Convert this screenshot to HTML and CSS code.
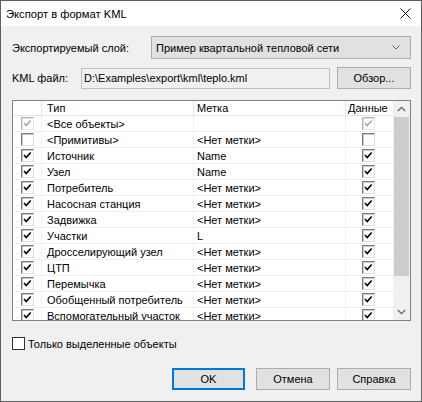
FILE: index.html
```html
<!DOCTYPE html>
<html>
<head>
<meta charset="utf-8">
<link rel="stylesheet" href="styles.css">
</head>
<body>
<div class="window">
  <div class="titlebar">
    <span class="title">Экспорт в формат KML</span>
    <svg class="close" width="11" height="11" viewBox="0 0 11 11"><path d="M0.5 0.5 L10.5 10.5 M10.5 0.5 L0.5 10.5" stroke="#111" stroke-width="1" fill="none"/></svg>
  </div>
  <div class="content">
    <div class="layer-row">
      <span class="lbl-layer">Экспортируемый слой:</span>
      <div class="combo">
        <span>Пример квартальной тепловой сети</span>
        <svg width="8" height="5" viewBox="0 0 8 5"><path d="M0.5 0.5 L4 4 L7.5 0.5" stroke="#666" stroke-width="1" fill="none"/></svg>
      </div>
    </div>
    <div class="file-row">
      <span class="lbl-file">KML файл:</span>
      <div class="field">D:\Examples\export\kml\teplo.kml</div>
      <div class="btn browse">Обзор...</div>
    </div>
    <div class="list">
      <div class="grid">
        <div class="row head">
          <div class="c c1"></div><div class="c c2">Тип</div><div class="c c3">Метка</div><div class="c c4">Данные</div>
        </div>
        <div class="row"><div class="c c1"><span class="cb dis"><svg viewBox="0 0 11 11"><path d="M2 5 L4.2 7.5 L8.7 2.5"/></svg></span></div><div class="c c2">&lt;Все объекты&gt;</div><div class="c c3"></div><div class="c c4"><span class="cb dis"><svg viewBox="0 0 11 11"><path d="M2 5 L4.2 7.5 L8.7 2.5"/></svg></span></div></div>
        <div class="row"><div class="c c1"><span class="cb"></span></div><div class="c c2">&lt;Примитивы&gt;</div><div class="c c3">&lt;Нет метки&gt;</div><div class="c c4"><span class="cb"></span></div></div>
        <div class="row"><div class="c c1"><span class="cb"><svg viewBox="0 0 11 11"><path d="M2 5 L4.2 7.5 L8.7 2.5"/></svg></span></div><div class="c c2">Источник</div><div class="c c3">Name</div><div class="c c4"><span class="cb"><svg viewBox="0 0 11 11"><path d="M2 5 L4.2 7.5 L8.7 2.5"/></svg></span></div></div>
        <div class="row"><div class="c c1"><span class="cb"><svg viewBox="0 0 11 11"><path d="M2 5 L4.2 7.5 L8.7 2.5"/></svg></span></div><div class="c c2">Узел</div><div class="c c3">Name</div><div class="c c4"><span class="cb"><svg viewBox="0 0 11 11"><path d="M2 5 L4.2 7.5 L8.7 2.5"/></svg></span></div></div>
        <div class="row"><div class="c c1"><span class="cb"><svg viewBox="0 0 11 11"><path d="M2 5 L4.2 7.5 L8.7 2.5"/></svg></span></div><div class="c c2">Потребитель</div><div class="c c3">&lt;Нет метки&gt;</div><div class="c c4"><span class="cb"><svg viewBox="0 0 11 11"><path d="M2 5 L4.2 7.5 L8.7 2.5"/></svg></span></div></div>
        <div class="row"><div class="c c1"><span class="cb"><svg viewBox="0 0 11 11"><path d="M2 5 L4.2 7.5 L8.7 2.5"/></svg></span></div><div class="c c2">Насосная станция</div><div class="c c3">&lt;Нет метки&gt;</div><div class="c c4"><span class="cb"><svg viewBox="0 0 11 11"><path d="M2 5 L4.2 7.5 L8.7 2.5"/></svg></span></div></div>
        <div class="row"><div class="c c1"><span class="cb"><svg viewBox="0 0 11 11"><path d="M2 5 L4.2 7.5 L8.7 2.5"/></svg></span></div><div class="c c2">Задвижка</div><div class="c c3">&lt;Нет метки&gt;</div><div class="c c4"><span class="cb"><svg viewBox="0 0 11 11"><path d="M2 5 L4.2 7.5 L8.7 2.5"/></svg></span></div></div>
        <div class="row"><div class="c c1"><span class="cb"><svg viewBox="0 0 11 11"><path d="M2 5 L4.2 7.5 L8.7 2.5"/></svg></span></div><div class="c c2">Участки</div><div class="c c3">L</div><div class="c c4"><span class="cb"><svg viewBox="0 0 11 11"><path d="M2 5 L4.2 7.5 L8.7 2.5"/></svg></span></div></div>
        <div class="row"><div class="c c1"><span class="cb"><svg viewBox="0 0 11 11"><path d="M2 5 L4.2 7.5 L8.7 2.5"/></svg></span></div><div class="c c2">Дросселирующий узел</div><div class="c c3">&lt;Нет метки&gt;</div><div class="c c4"><span class="cb"><svg viewBox="0 0 11 11"><path d="M2 5 L4.2 7.5 L8.7 2.5"/></svg></span></div></div>
        <div class="row"><div class="c c1"><span class="cb"><svg viewBox="0 0 11 11"><path d="M2 5 L4.2 7.5 L8.7 2.5"/></svg></span></div><div class="c c2">ЦТП</div><div class="c c3">&lt;Нет метки&gt;</div><div class="c c4"><span class="cb"><svg viewBox="0 0 11 11"><path d="M2 5 L4.2 7.5 L8.7 2.5"/></svg></span></div></div>
        <div class="row"><div class="c c1"><span class="cb"><svg viewBox="0 0 11 11"><path d="M2 5 L4.2 7.5 L8.7 2.5"/></svg></span></div><div class="c c2">Перемычка</div><div class="c c3">&lt;Нет метки&gt;</div><div class="c c4"><span class="cb"><svg viewBox="0 0 11 11"><path d="M2 5 L4.2 7.5 L8.7 2.5"/></svg></span></div></div>
        <div class="row"><div class="c c1"><span class="cb"><svg viewBox="0 0 11 11"><path d="M2 5 L4.2 7.5 L8.7 2.5"/></svg></span></div><div class="c c2">Обобщенный потребитель</div><div class="c c3">&lt;Нет метки&gt;</div><div class="c c4"><span class="cb"><svg viewBox="0 0 11 11"><path d="M2 5 L4.2 7.5 L8.7 2.5"/></svg></span></div></div>
        <div class="row"><div class="c c1"><span class="cb"><svg viewBox="0 0 11 11"><path d="M2 5 L4.2 7.5 L8.7 2.5"/></svg></span></div><div class="c c2">Вспомогательный участок</div><div class="c c3">&lt;Нет метки&gt;</div><div class="c c4"><span class="cb"><svg viewBox="0 0 11 11"><path d="M2 5 L4.2 7.5 L8.7 2.5"/></svg></span></div></div>
      </div>
      <div class="scrollbar">
        <div class="sb-btn"><svg width="9" height="6" viewBox="0 0 9 6"><path d="M0.8 5 L4.5 1.3 L8.2 5" stroke="#606060" stroke-width="1.2" fill="none"/></svg></div>
        <div class="sb-track"><div class="thumb"></div></div>
        <div class="sb-btn"><svg width="9" height="6" viewBox="0 0 9 6"><path d="M0.8 1 L4.5 4.7 L8.2 1" stroke="#606060" stroke-width="1.2" fill="none"/></svg></div>
      </div>
    </div>
    <div class="only-row">
      <span class="cb2"></span>
      <span>Только выделенные объекты</span>
    </div>
    <div class="buttons">
      <div class="btn ok">OK</div>
      <div class="btn cancel">Отмена</div>
      <div class="btn help">Справка</div>
    </div>
  </div>
</div>
</body>
</html>
```

FILE: styles.css
```css
* { box-sizing: border-box; }
body {
  margin: 0;
  font-family: "Liberation Sans", Arial, sans-serif;
  font-size: 11px;
  color: #000;
}
.window {
  width: 422px;
  height: 402px;
  border: 1px solid #5f5f5f;
  background: #f0f0f0;
  display: flex;
  flex-direction: column;
  overflow: hidden;
}
.titlebar {
  height: 25px;
  background: #fff;
  display: flex;
  align-items: center;
  justify-content: space-between;
  padding: 0 10px 0 5px;
  flex: none;
}
.title { font-size: 11.2px; }
.content {
  padding: 10px 10px 0 11px;
  display: flex;
  flex-direction: column;
}
.layer-row {
  display: flex;
  align-items: center;
  height: 23px;
}
.lbl-layer { width: 139px; flex: none; }
.combo {
  flex: 1;
  height: 23px;
  background: #e1e1e1;
  border: 1px solid #adadad;
  display: flex;
  align-items: center;
  justify-content: space-between;
  padding: 0 10px 0 4px;
}
.file-row {
  display: flex;
  align-items: center;
  height: 22px;
  margin-top: 8px;
}
.lbl-file { width: 69px; flex: none; }
.field {
  width: 249px;
  height: 21px;
  border: 1px solid #bfbfbf;
  background: #f0f0f0;
  padding: 0 2px;
  display: flex;
  align-items: center;
  flex: none;
}
.btn {
  height: 22px;
  background: #e1e1e1;
  border: 1px solid #adadad;
  display: flex;
  align-items: center;
  justify-content: center;
  flex: none;
}
.browse { width: 74px; margin-left: 7px; }
.list {
  margin-top: 11px;
  height: 221px;
  border: 1px solid #828282;
  background: #fff;
  display: flex;
  overflow: hidden;
}
.grid {
  width: 380px;
  flex: none;
  display: flex;
  flex-direction: column;
  overflow: hidden;
}
.row {
  display: flex;
  height: 16px;
  flex: none;
  border-bottom: 1px solid #f0f0f0;
}
.row.head {
  height: 15px;
  border-bottom: 1px solid #e5e5e5;
}
.c {
  display: flex;
  align-items: center;
  border-right: 1px solid #f0f0f0;
  white-space: nowrap;
  overflow: hidden;
}
.head .c { border-right-color: #e5e5e5; }
.c1 { width: 29px; padding-left: 8px; }
.c2 { width: 152px; padding-left: 5px; }
.c3 { width: 152px; padding-left: 3px; }
.c4 { width: 47px; padding-left: 16px; border-right: none; }
.head .c4 { padding-left: 2px; }
.cb {
  width: 13px;
  height: 13px;
  flex: none;
  background: #fff;
  border-style: solid;
  border-width: 1px;
  border-color: #7a7a7a #dcdcdc #dcdcdc #7a7a7a;
  box-shadow: inset 1px 1px 0 #c8c8c8;
  display: flex;
}
.cb svg {
  width: 11px;
  height: 11px;
}
.cb svg path {
  fill: none;
  stroke: #000;
  stroke-width: 1.6;
}
.cb.dis {
  border-color: #b4b4b4 #e6e6e6 #e6e6e6 #b4b4b4;
  box-shadow: inset 1px 1px 0 #e0e0e0;
}
.cb.dis svg path { stroke: #a8a8a8; }
.scrollbar {
  width: 17px;
  flex: none;
  background: #f0f0f0;
  display: flex;
  flex-direction: column;
}
.sb-btn {
  height: 16px;
  flex: none;
  display: flex;
  align-items: center;
  justify-content: center;
}
.sb-track { flex: 1; }
.thumb {
  height: 159px;
  margin: 0 1px;
  background: #cdcdcd;
}
.only-row {
  margin-top: 16px;
  height: 13px;
  display: flex;
  align-items: center;
}
.cb2 {
  width: 13px;
  height: 13px;
  border: 1px solid #333;
  background: #fff;
  margin-right: 3px;
  flex: none;
}
.buttons {
  margin-top: 18px;
  display: flex;
  justify-content: flex-end;
}
.ok { width: 73px; border: 2px solid #0078d7; }
.cancel { width: 74px; margin-left: 11px; }
.help { width: 74px; margin-left: 7px; }
```
